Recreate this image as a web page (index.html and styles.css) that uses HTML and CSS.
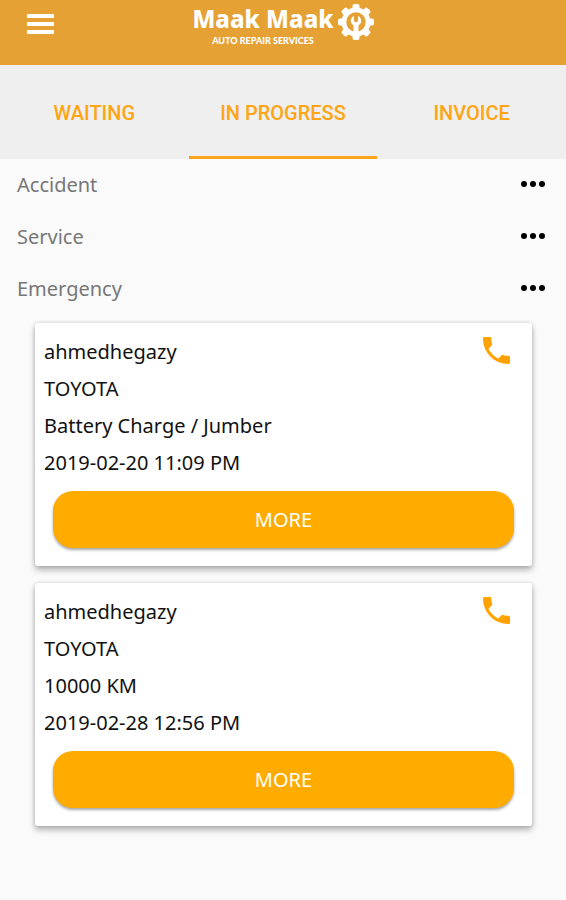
FILE: index.html
```html
<!DOCTYPE html>
<html lang="en">
<head>
  <meta charset="UTF-8" />
  <meta name="viewport" content="width=device-width, initial-scale=1.0" />
  <title>Maak Maak - Auto Repair Services</title>
  <link rel="stylesheet" href="styles.css">
</head>
<body>
  <header class="topbar">
    <button class="menu-btn" type="button" aria-label="Menu">
      <span></span>
      <span></span>
      <span></span>
    </button>
    <div class="logo">
      <div class="logo-text">
        <span class="logo-name">Maak Maak</span>
        <span class="logo-tagline">AUTO REPAIR SERVICES</span>
      </div>
      <!-- Gear with a wrench inside -->
      <svg class="logo-gear" viewBox="0 0 36 36" aria-hidden="true">
        <g fill="#fff">
          <g id="teeth">
            <rect x="14.5" y="0" width="7" height="36" rx="2" />
            <rect x="0" y="14.5" width="36" height="7" rx="2" />
          </g>
          <use href="#teeth" transform="rotate(45 18 18)" />
          <circle cx="18" cy="18" r="14.5" />
        </g>
        <circle cx="18" cy="18" r="8.500" fill="none" stroke="#e5a134" stroke-width="2.500" />
        <circle cx="18" cy="18" r="8" fill="#e5a134" />
        <path d="M16 12v5l2 1.500 2-1.500v-5c3 1 4 5 2.500 7.500l-2 2V28h-5v-6.500l-2-2C12 17 13 13 16 12z" fill="#fff" />
      </svg>
    </div>
  </header>

  <nav class="tabs">
    <button class="tab" type="button">WAITING</button>
    <button class="tab active" type="button">IN PROGRESS</button>
    <button class="tab" type="button">INVOICE</button>
  </nav>

  <main>
    <div class="section-row">
      <h2>Accident</h2>
      <button class="dots" type="button" aria-label="Accident options"><i></i><i></i><i></i></button>
    </div>
    <div class="section-row">
      <h2>Service</h2>
      <button class="dots" type="button" aria-label="Service options"><i></i><i></i><i></i></button>
    </div>
    <div class="section-row">
      <h2>Emergency</h2>
      <button class="dots" type="button" aria-label="Emergency options"><i></i><i></i><i></i></button>
    </div>

    <div class="orders">
      <article class="card">
        <div class="card-top">
          <div class="card-info">
            <p>ahmedhegazy</p>
            <p>TOYOTA</p>
            <p>Battery Charge / Jumber</p>
            <p>2019-02-20 11:09 PM</p>
          </div>
          <button class="call-btn" type="button" aria-label="Call ahmedhegazy">
            <svg viewBox="3 3 18 18" aria-hidden="true"><path d="M6.62 10.79c1.44 2.83 3.76 5.14 6.59 6.59l2.2-2.2c.27-.27.67-.36 1.02-.24 1.12.37 2.33.57 3.57.57.55 0 1 .45 1 1V20c0 .55-.45 1-1 1-9.39 0-17-7.61-17-17 0-.55.45-1 1-1h3.5c.55 0 1 .45 1 1 0 1.25.2 2.45.57 3.57.11.35.03.74-.25 1.02l-2.2 2.2z" /></svg>
          </button>
        </div>
        <button class="more-btn" type="button">MORE</button>
      </article>

      <article class="card">
        <div class="card-top">
          <div class="card-info">
            <p>ahmedhegazy</p>
            <p>TOYOTA</p>
            <p>10000 KM</p>
            <p>2019-02-28 12:56 PM</p>
          </div>
          <button class="call-btn" type="button" aria-label="Call ahmedhegazy">
            <svg viewBox="3 3 18 18" aria-hidden="true"><path d="M6.62 10.79c1.44 2.83 3.76 5.14 6.59 6.59l2.2-2.2c.27-.27.67-.36 1.02-.24 1.12.37 2.33.57 3.57.57.55 0 1 .45 1 1V20c0 .55-.45 1-1 1-9.39 0-17-7.61-17-17 0-.55.45-1 1-1h3.5c.55 0 1 .45 1 1 0 1.25.2 2.45.57 3.57.11.35.03.74-.25 1.02l-2.2 2.2z" /></svg>
          </button>
        </div>
        <button class="more-btn" type="button">MORE</button>
      </article>
    </div>
  </main>
</body>
</html>
```

FILE: styles.css
```css
* {
  box-sizing: border-box;
}
body {
  margin: 0;
  background: #fafafa;
  color: #111;
  font-family: "Noto Sans", sans-serif;
  font-size: 20px;
}
button {
  border: none;
  padding: 0;
  background: none;
  font-family: inherit;
  cursor: pointer;
}

/* Header */
.topbar {
  display: grid;
  grid-template-columns: 1fr auto 1fr;
  align-items: start;
  height: 65px;
  padding: 4px 27px;
  background: #e5a134;
}
.menu-btn {
  display: flex;
  flex-direction: column;
  justify-content: center;
  gap: 4px;
  width: 27px;
  height: 40px;
}
.menu-btn span {
  height: 4px;
  background: #fff;
}
.logo {
  display: flex;
  gap: 4px;
  color: #fff;
}
.logo-text {
  display: flex;
  flex-direction: column;
  align-items: center;
}
.logo-name {
  font-size: 24px;
  font-weight: 800;
  line-height: 30px;
}
.logo-tagline {
  font-family: Lato, sans-serif;
  font-size: 9px;
  font-weight: 900;
  line-height: 14px;
}
.logo-gear {
  width: 36px;
  height: 36px;
}

/* Tabs */
.tabs {
  display: grid;
  grid-template-columns: repeat(3, 1fr);
  height: 94px;
  background: #efefef;
}
.tab {
  padding-top: 4px;
  border-bottom: 3px solid transparent;
  color: #ffa412;
  font-family: Roboto, sans-serif;
  font-size: 20px;
  font-weight: 500;
}
.tab.active {
  border-bottom-color: #faa51c;
}

/* Sections */
.section-row {
  display: flex;
  align-items: center;
  justify-content: space-between;
  height: 52px;
  padding: 0 21px 2px 17px;
}
.section-row h2 {
  margin: 0;
  color: #777;
  font-size: 20px;
  font-weight: 400;
}
.dots {
  display: flex;
  gap: 3px;
  height: 24px;
  align-items: center;
}
.dots i {
  width: 6px;
  height: 6px;
  border-radius: 50%;
  background: #000;
}

/* Order cards */
.orders {
  display: flex;
  flex-direction: column;
  gap: 17px;
  padding: 8px 34px 24px 35px;
}
.card {
  padding: 10px 18px 18px;
  border-radius: 3px;
  background: #fff;
  box-shadow: 0 4px 6px rgba(0, 0, 0, 0.28), 0 0 4px rgba(0, 0, 0, 0.14);
}
.card-top {
  display: flex;
  justify-content: space-between;
  align-items: flex-start;
  margin: 0 4px 10px -9px;
}
.card-info p {
  margin: 0;
  line-height: 37px;
}
.call-btn {
  width: 27px;
  height: 34px;
}
.call-btn svg {
  display: block;
  width: 27px;
  height: 27px;
  fill: #ffa200;
}
.more-btn {
  width: 100%;
  height: 57px;
  border-radius: 20px;
  background: #ffab00;
  box-shadow: 0 2px 3px rgba(0, 0, 0, 0.35);
  color: #fff;
  font-size: 20px;
}
```
